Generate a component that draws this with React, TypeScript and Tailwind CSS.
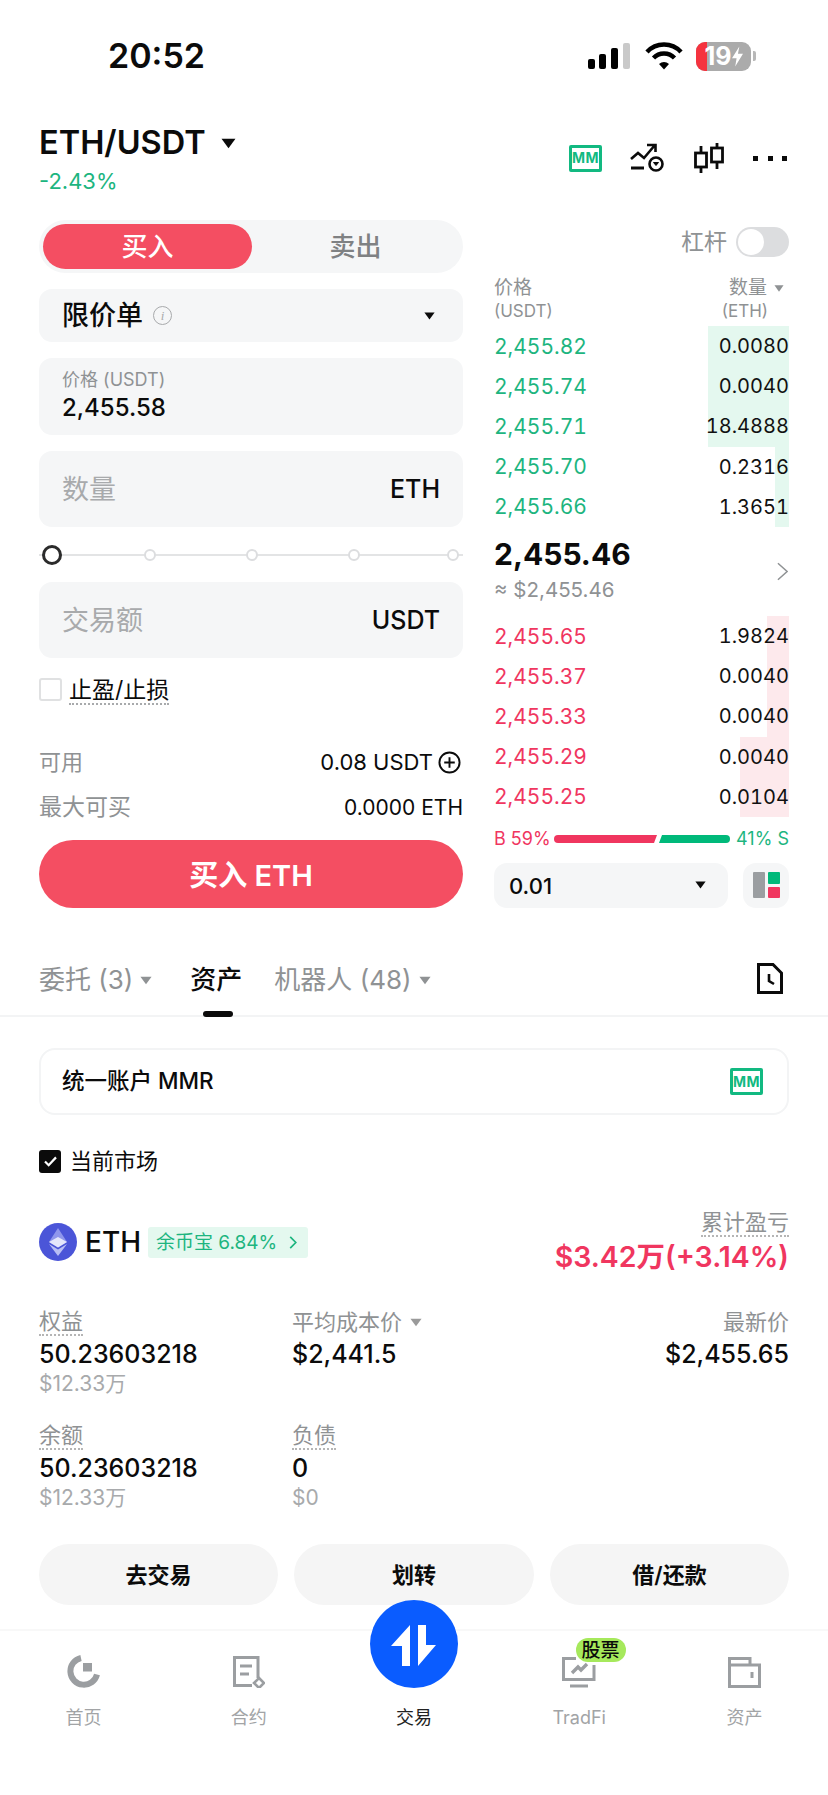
import React from 'react';

const asks = [
  ['2,455.82', '0.0080', 81],
  ['2,455.74', '0.0040', 81],
  ['2,455.71', '18.4888', 81],
  ['2,455.70', '0.2316', 14],
  ['2,455.66', '1.3651', 14],
] as const;

const bids = [
  ['2,455.65', '1.9824', 22],
  ['2,455.37', '0.0040', 22],
  ['2,455.33', '0.0040', 22],
  ['2,455.29', '0.0040', 49],
  ['2,455.25', '0.0104', 49],
] as const;

function Caret({ className }: { className: string }) {
  return (
    <svg viewBox="0 0 14 10" className={className} fill="currentColor">
      <path d="M0.5 0.5 H13.5 L7 9.5 Z" />
    </svg>
  );
}

function MMIcon() {
  return (
    <div className="w-[33px] h-[27px] border-[3px] border-[#12b981] rounded-[2px] flex items-center justify-center text-[#12b981] text-[14px] font-bold leading-none tracking-[0.5px]">
      MM
    </div>
  );
}

function BookRow({ price, qty, bar, tone }: { price: string; qty: string; bar: number; tone: 'up' | 'down' }) {
  return (
    <div className="relative h-[40.2px] flex items-center justify-between text-[21px] leading-none tabular-nums">
      <div
        className={tone === 'up' ? 'absolute right-0 top-0 bottom-0 bg-[#e4f8ef]' : 'absolute right-0 top-0 bottom-0 bg-[#fde9ec]'}
        style={{ width: bar }}
      />
      <span className={tone === 'up' ? 'relative text-[#1db57f]' : 'relative text-[#f0365f]'}>{price}</span>
      <span className="relative text-[20px] text-[#111]">{qty}</span>
    </div>
  );
}

function Stat({ label, value, sub, dotted, caret, right, className }: {
  label: string;
  value: string;
  sub?: string;
  dotted?: boolean;
  caret?: boolean;
  right?: boolean;
  className: string;
}) {
  return (
    <div className={className}>
      <div className={right ? 'h-[24px] flex justify-end items-center' : 'h-[24px] flex items-center'}>
        <span className={dotted ? 'text-[22px] leading-[24px] text-[#8f9294] border-b-2 border-dotted border-[#b5b5b5] h-[27px]' : 'text-[22px] leading-[24px] text-[#8f9294]'}>
          {label}
        </span>
        {caret && <Caret className="w-[12px] h-[9px] ml-[8px] text-[#9a9a9a]" />}
      </div>
      <div className={right ? 'mt-[4px] h-[32px] text-right text-[25px] leading-[32px] font-medium text-[#0b0b0b]' : 'mt-[4px] h-[32px] text-[25px] leading-[32px] font-medium text-[#0b0b0b]'}>
        {value}
      </div>
      {sub && <div className="h-[28px] text-[21px] leading-[28px] text-[#a8aaac]">{sub}</div>}
    </div>
  );
}

function NavItem({ label, active, children }: { label: string; active?: boolean; children?: React.ReactNode }) {
  return (
    <div className="relative w-[165.4px] flex flex-col items-center">
      <div className="h-[57px] w-full flex justify-center items-end">{children}</div>
      <div className={active ? 'mt-[18px] text-[18px] leading-[24px] text-[#222]' : 'mt-[18px] text-[18px] leading-[24px] text-[#a2a4a6]'}>{label}</div>
    </div>
  );
}

export default function App() {
  return (
    <div className="relative w-[828px] h-[1795px] overflow-hidden bg-white text-[#0b0b0b] [font-family:Inter,'Noto_Sans_CJK_SC',sans-serif]">
      {/* status bar */}
      <div className="h-[112px] pl-[108px] pr-[72px] flex items-center justify-between">
        <span className="text-[34px] font-semibold leading-none">20:52</span>
        <div className="flex items-center">
          <svg viewBox="0 0 42 26" className="w-[42px] h-[26px] mr-[2px]">
            <rect x="0" y="16" width="7" height="10" rx="2" fill="#000" />
            <rect x="11" y="11" width="7" height="15" rx="2" fill="#000" />
            <rect x="23" y="5" width="7" height="21" rx="2" fill="#000" />
            <rect x="35" y="0" width="7" height="26" rx="2" fill="#c9c9c9" />
          </svg>
          <svg viewBox="0 0 38 28" className="w-[38px] h-[28px] ml-[13px]">
            <path d="M2 10 C11 0 27 0 36 10" fill="none" stroke="#000" strokeWidth="4.4" />
            <path d="M8.5 16 C14 10 24 10 29.5 16" fill="none" stroke="#000" strokeWidth="4.4" />
            <path d="M14 22 L19 27.5 L24 22 C21 19.2 17 19.2 14 22 Z" fill="#000" />
          </svg>
          <div className="relative ml-[13px] w-[55px] h-[29px] rounded-[9px] overflow-hidden bg-[#ababab] flex items-center justify-center text-white text-[25px] font-bold leading-none">
            <div className="absolute left-0 top-0 bottom-0 w-[11px] bg-[#f5333f]" />
            <span className="relative">19</span>
            <svg viewBox="0 0 12 22" className="relative w-[11px] h-[21px]" fill="#fff">
              <path d="M8 0 L0 13 H5 L3.5 22 L12 8 H6.5 Z" />
            </svg>
          </div>
          <div className="ml-[2px] w-[3px] h-[10px] rounded-r-[2px] bg-[#b8b8b8]" />
        </div>
      </div>

      {/* pair header */}
      <div className="h-[108px] px-[39px] flex justify-between">
        <div>
          <div className="flex items-center h-[62px]">
            <span className="text-[32.5px] font-semibold leading-none">ETH/USDT</span>
            <Caret className="w-[15px] h-[11px] ml-[15px] text-[#0b0b0b]" />
          </div>
          <div className="mt-[-6px] text-[22px] leading-[26px] text-[#1db57f]">-2.43%</div>
        </div>
        <div className="h-[62px] mt-[15px] mr-[2px] flex items-center">
          <MMIcon />
          <svg viewBox="0 0 34 30" className="w-[34px] h-[30px] ml-[28px]" fill="none" stroke="#0b0b0b" strokeWidth="2.6">
            <path d="M1 16 L8 10 L14 15 L25 2 M17 2 H25.5 V9" />
            <path d="M1 25 H14" strokeWidth="3" />
            <circle cx="26" cy="21" r="6.5" />
            <path d="M23.5 19.5 H28.5 L26 22.5 Z" fill="#0b0b0b" strokeWidth="1" />
          </svg>
          <svg viewBox="0 0 30 32" className="w-[30px] h-[32px] ml-[30px]" fill="none" stroke="#0b0b0b" strokeWidth="2.8">
            <path d="M7 4 V31 M23 1 V27" />
            <rect x="1.5" y="11" width="11" height="14" fill="#fff" />
            <rect x="17.5" y="6" width="11" height="14" fill="#fff" />
          </svg>
          <div className="ml-[29px] w-[34px] flex justify-between">
            <div className="w-[5px] h-[5px] bg-[#0b0b0b]" />
            <div className="w-[5px] h-[5px] bg-[#0b0b0b]" />
            <div className="w-[5px] h-[5px] bg-[#0b0b0b]" />
          </div>
        </div>
      </div>

      {/* trade form + order book */}
      <div className="px-[39px] flex justify-between">
        <div className="w-[424px]">
          <div className="h-[53px] rounded-full bg-[#f5f6f7] p-[4px] flex text-[26px] font-medium leading-none">
            <div className="w-[209px] rounded-full bg-[#f44e62] text-white flex items-center justify-center">买入</div>
            <div className="flex-1 text-[#7f8183] flex items-center justify-center">卖出</div>
          </div>

          <div className="mt-[16px] h-[53px] rounded-[13px] bg-[#f5f6f7] pl-[23px] pr-[28px] flex items-center justify-between">
            <div className="flex items-center">
              <span className="text-[27px] font-medium leading-none">限价单</span>
              <span className="ml-[10px] w-[19px] h-[19px] rounded-full border-[1.5px] border-[#a8aaac] text-[#a8aaac] flex items-center justify-center text-[13px] italic leading-none [font-family:'Liberation_Serif',serif]">i</span>
            </div>
            <Caret className="w-[11px] h-[8px] text-[#0b0b0b]" />
          </div>

          <div className="mt-[16px] h-[77px] rounded-[13px] bg-[#f5f6f7] pl-[23px] pt-[10px]">
            <div className="text-[18px] leading-[24px] text-[#8f9294]">价格 (USDT)</div>
            <div className="text-[24px] leading-[31px] font-medium">2,455.58</div>
          </div>

          <div className="mt-[16px] h-[76px] rounded-[13px] bg-[#f5f6f7] pl-[23px] pr-[23px] flex items-center justify-between">
            <span className="text-[27px] text-[#a8aaac] leading-none">数量</span>
            <span className="text-[25px] font-medium leading-none">ETH</span>
          </div>

          <div className="relative h-[55px] flex items-center">
            <div className="w-full h-[2px] bg-[#e3e4e5]" />
            <div className="absolute left-[3px] w-[20px] h-[20px] rounded-full bg-white border-[3px] border-[#2b2b2b]" />
            <div className="absolute left-[105px] w-[12px] h-[12px] rounded-full bg-white border-2 border-[#dcdddf]" />
            <div className="absolute left-[207px] w-[12px] h-[12px] rounded-full bg-white border-2 border-[#dcdddf]" />
            <div className="absolute left-[309px] w-[12px] h-[12px] rounded-full bg-white border-2 border-[#dcdddf]" />
            <div className="absolute left-[408px] w-[12px] h-[12px] rounded-full bg-white border-2 border-[#dcdddf]" />
          </div>

          <div className="h-[76px] rounded-[13px] bg-[#f5f6f7] pl-[23px] pr-[23px] flex items-center justify-between">
            <span className="text-[27px] text-[#a8aaac] leading-none">交易额</span>
            <span className="text-[25px] font-medium leading-none">USDT</span>
          </div>

          <div className="mt-[19px] h-[24px] flex items-center">
            <div className="w-[23px] h-[23px] rounded-[3px] border-2 border-[#e0e1e2]" />
            <span className="ml-[7px] mt-[4px] h-[27px] text-[23px] leading-[24px] border-b-2 border-dotted border-[#a8aaac]">止盈/止损</span>
          </div>

          <div className="mt-[47px] h-[28px] flex items-center justify-between text-[22px] leading-none">
            <span className="text-[#8f9294]">可用</span>
            <div className="flex items-center">
              <span>0.08 USDT</span>
              <svg viewBox="0 0 24 24" className="w-[23px] h-[23px] ml-[5px] mr-[2px]" fill="none" stroke="#0b0b0b" strokeWidth="2">
                <circle cx="12" cy="12" r="10.5" />
                <path d="M6.5 12 H17.5 M12 6.5 V17.5" />
              </svg>
            </div>
          </div>

          <div className="mt-[17px] h-[28px] flex items-center justify-between leading-none">
            <span className="text-[23px] text-[#8f9294]">最大可买</span>
            <span className="text-[21px]">0.0000 ETH</span>
          </div>

          <div className="mt-[19px] h-[68px] rounded-full bg-[#f44e62] flex items-center justify-center text-white text-[29px] font-semibold leading-none pt-[2px]">
            买入 ETH
          </div>
        </div>

        <div className="w-[295px]">
          <div className="h-[44px] flex items-center justify-end">
            <span className="text-[23px] text-[#8f9294] leading-none">杠杆</span>
            <div className="ml-[9px] w-[53px] h-[30px] rounded-full bg-[#dcdddf] p-[2px]">
              <div className="w-[26px] h-[26px] rounded-full bg-white" />
            </div>
          </div>
          <div className="mt-[12px] h-[50px] flex justify-between">
            <div>
              <div className="text-[19px] leading-[24px] text-[#8f9294]">价格</div>
              <div className="text-[17px] leading-[22px] text-[#8f9294]">(USDT)</div>
            </div>
            <div className="flex flex-col items-end">
              <div className="flex items-center text-[19px] leading-[24px] text-[#8f9294]">
                数量
                <Caret className="w-[10px] h-[7px] ml-[7px] mr-[5px] text-[#8f9294]" />
              </div>
              <div className="text-[17px] leading-[22px] text-[#8f9294] mr-[21px]">(ETH)</div>
            </div>
          </div>

          {asks.map((r) => (
            <BookRow key={r[0]} price={r[0]} qty={r[1]} bar={r[2]} tone="up" />
          ))}

          <div className="h-[89px] relative pt-[7px]">
            <div className="text-[30px] font-bold leading-[40px] text-[#0b0b0b]">2,455.46</div>
            <div className="text-[20.5px] leading-[31px] text-[#8f9294]">≈ $2,455.46</div>
            <svg viewBox="0 0 12 20" className="absolute right-[1px] top-[35px] w-[11px] h-[19px]" fill="none" stroke="#8f9294" strokeWidth="1.6">
              <path d="M1 1 L11 10 L1 19" />
            </svg>
          </div>

          {bids.map((r) => (
            <BookRow key={r[0]} price={r[0]} qty={r[1]} bar={r[2]} tone="down" />
          ))}

          <div className="mt-[12px] h-[20px] flex items-center justify-between text-[18px] leading-none">
            <span className="text-[#f0365f]">B 59%</span>
            <svg viewBox="0 0 176 8" className="w-[176px] h-[8px] mr-[2px]">
              <path d="M4 0 H103 L100 8 H4 A4 4 0 0 1 4 0 Z" fill="#f0365f" />
              <path d="M108 0 H172 A4 4 0 0 1 172 8 H105 Z" fill="#00b97a" />
            </svg>
            <span className="text-[#1db57f]">41% S</span>
          </div>

          <div className="mt-[14px] flex justify-between">
            <div className="w-[234px] h-[45px] rounded-[13px] bg-[#f5f6f7] pl-[15px] pr-[22px] flex items-center justify-between">
              <span className="text-[22px] font-medium leading-none pt-[1px]">0.01</span>
              <Caret className="w-[11px] h-[8px] text-[#0b0b0b]" />
            </div>
            <div className="w-[46px] h-[45px] rounded-[13px] bg-[#f5f6f7] flex items-center justify-center">
              <svg viewBox="0 0 27 26" className="w-[27px] h-[26px]">
                <rect x="0" y="0" width="12" height="26" rx="1" fill="#9b9ea1" />
                <rect x="15" y="0" width="12" height="12" rx="1" fill="#00b97a" />
                <rect x="15" y="15" width="12" height="11" rx="1" fill="#f0365f" />
              </svg>
            </div>
          </div>
        </div>
      </div>

      {/* tabs */}
      <div className="mt-[45px] h-[64px] pl-[39px] pr-[45px] border-b-2 border-[#f3f4f5] flex justify-between">
        <div className="flex text-[26px] leading-none pt-[2px]">
          <div className="h-[50px] flex items-center text-[#8f9294]">
            委托 (3)
            <Caret className="w-[12px] h-[9px] ml-[7px] text-[#8f9294]" />
          </div>
          <div className="relative ml-[38px] h-[50px] flex items-center font-medium">
            资产
            <div className="absolute left-[13px] bottom-[-12px] w-[30px] h-[6px] rounded-full bg-[#0b0b0b]" />
          </div>
          <div className="ml-[32px] h-[50px] flex items-center text-[#8f9294]">
            机器人 (48)
            <Caret className="w-[12px] h-[9px] ml-[7px] text-[#8f9294]" />
          </div>
        </div>
        <svg viewBox="0 0 26 31" className="w-[26px] h-[31px] mt-[10px]" fill="none" stroke="#0b0b0b" strokeWidth="3">
          <path d="M1.5 1.5 H16 L24.5 10 V29.5 H1.5 Z" />
          <path d="M12 11 V18 L17 21" strokeWidth="2.6" />
        </svg>
      </div>

      {/* account panel */}
      <div className="px-[39px]">
        <div className="mt-[31px] h-[67px] rounded-[16px] border-2 border-[#f3f4f5] pl-[21px] pr-[24px] flex items-center justify-between">
          <span className="text-[22.5px] font-medium leading-none">统一账户 MMR</span>
          <MMIcon />
        </div>

        <div className="mt-[34px] h-[24px] flex items-center">
          <div className="w-[22px] h-[23px] rounded-[3px] bg-[#0b0b0b] flex items-center justify-center">
            <svg viewBox="0 0 14 12" className="w-[13px] h-[11px]" fill="none" stroke="#fff" strokeWidth="2.4">
              <path d="M1 6 L5 10 L13 1.5" />
            </svg>
          </div>
          <span className="ml-[9px] text-[22px] leading-none">当前市场</span>
        </div>

        <div className="mt-[47px] h-[55px] flex justify-between">
          <div className="flex items-center h-[46px] mt-[-1px]">
            <svg viewBox="0 0 38 38" className="w-[38px] h-[38px]">
              <circle cx="19" cy="19" r="19" fill="#4b55d8" />
              <path d="M19 5 L28 19 L19 24.5 L10 19 Z" fill="#8f96ec" />
              <path d="M19 14 L28 19 L19 24.5 L10 19 Z" fill="#e4e6fb" />
              <path d="M10 21 L19 33 L28 21 L19 26.5 Z" fill="#b9bef4" />
            </svg>
            <span className="ml-[8px] text-[28px] font-medium leading-none">ETH</span>
            <div className="ml-[7px] w-[160px] h-[31px] rounded-[3px] bg-[#e4f8ef] text-[#1db57f] pl-[8px] flex items-center text-[19px] leading-none">
              余币宝 6.84%
              <svg viewBox="0 0 8 14" className="w-[8px] h-[13px] ml-[12px]" fill="none" stroke="#1db57f" strokeWidth="1.8">
                <path d="M1 1 L7 7 L1 13" />
              </svg>
            </div>
          </div>
          <div className="flex flex-col items-end mt-[-10px]">
            <span className="h-[27px] text-[22px] leading-[24px] text-[#8f9294] border-b-2 border-dotted border-[#b5b5b5]">累计盈亏</span>
            <span className="mt-[3px] text-[28.5px] font-semibold leading-[34px] text-[#f0365f]">$3.42万(+3.14%)</span>
          </div>
        </div>

        <div className="mt-[35px] flex">
          <Stat className="w-[253px]" label="权益" value="50.23603218" sub="$12.33万" dotted />
          <Stat className="w-[253px]" label="平均成本价" value="$2,441.5" caret />
          <Stat className="flex-1" label="最新价" value="$2,455.65" right />
        </div>

        <div className="mt-[26px] flex">
          <Stat className="w-[253px]" label="余额" value="50.23603218" sub="$12.33万" dotted />
          <Stat className="w-[253px]" label="负债" value="0" sub="$0" dotted />
        </div>

        <div className="mt-[32px] flex justify-between text-[22px] font-semibold leading-none">
          <div className="w-[239px] h-[61px] rounded-full bg-[#f5f5f5] flex items-center justify-center">去交易</div>
          <div className="w-[240px] h-[61px] rounded-full bg-[#f5f5f5] flex items-center justify-center">划转</div>
          <div className="w-[239px] h-[61px] rounded-full bg-[#f5f5f5] flex items-center justify-center">借/还款</div>
        </div>
      </div>

      {/* bottom nav */}
      <div className="mt-[24px] px-[1px] border-t-2 border-[#f8f8f8] flex">
        <NavItem label="首页">
          <svg viewBox="0 0 33 33" className="w-[33px] h-[33px]">
            <path d="M14 3 A13.5 13.5 0 1 0 30 19.5" fill="none" stroke="#9b9ea1" strokeWidth="6" />
            <rect x="16" y="8" width="9" height="8.5" fill="#9b9ea1" />
          </svg>
        </NavItem>
        <NavItem label="合约">
          <svg viewBox="0 0 32 32" className="w-[32px] h-[32px]" fill="none" stroke="#9b9ea1" strokeWidth="3">
            <path d="M25 22 V1.5 H1.5 V29.5 H19" />
            <path d="M7 10 H19 M7 18 H16" />
            <path d="M26 22 L31 27 L26 32 L21 27 Z" strokeWidth="2.6" />
          </svg>
        </NavItem>
        <NavItem label="交易" active />
        <NavItem label="TradFi">
          <svg viewBox="0 0 34 31" className="w-[34px] h-[31px]" fill="none" stroke="#9b9ea1" strokeWidth="3">
            <path d="M32 8 V22.5 H1.5 V1.5 H14" />
            <path d="M8 29 H26" />
            <path d="M10 16 L16 10 L19 13 L25 7" strokeWidth="3.4" />
          </svg>
          <div className="absolute left-[79px] top-[7px] w-[50px] h-[24px] rounded-full bg-[#a6e95c] flex items-center justify-center text-[19px] font-medium leading-none text-[#0b0b0b]">股票</div>
        </NavItem>
        <NavItem label="资产">
          <svg viewBox="0 0 33 31" className="w-[33px] h-[31px]" fill="none" stroke="#9b9ea1" strokeWidth="3">
            <path d="M1.5 8 V1.5 H22 V8 M1.5 8 H31.5 V29.5 H1.5 Z" />
            <path d="M24 15 V21" />
          </svg>
        </NavItem>
      </div>

      {/* trade button sits over the nav border */}
      <div className="absolute left-[370px] top-[1600px] w-[88px] h-[88px] rounded-full bg-[#0a5cff] flex items-center justify-center">
        <svg viewBox="0 0 88 88" className="w-[88px] h-[88px]" fill="#fff">
          <path d="M40 25 V66 H32 V46 H21 Z" />
          <path d="M48 66 V25 H56 V45 H66 Z" />
        </svg>
      </div>
    </div>
  );
}
